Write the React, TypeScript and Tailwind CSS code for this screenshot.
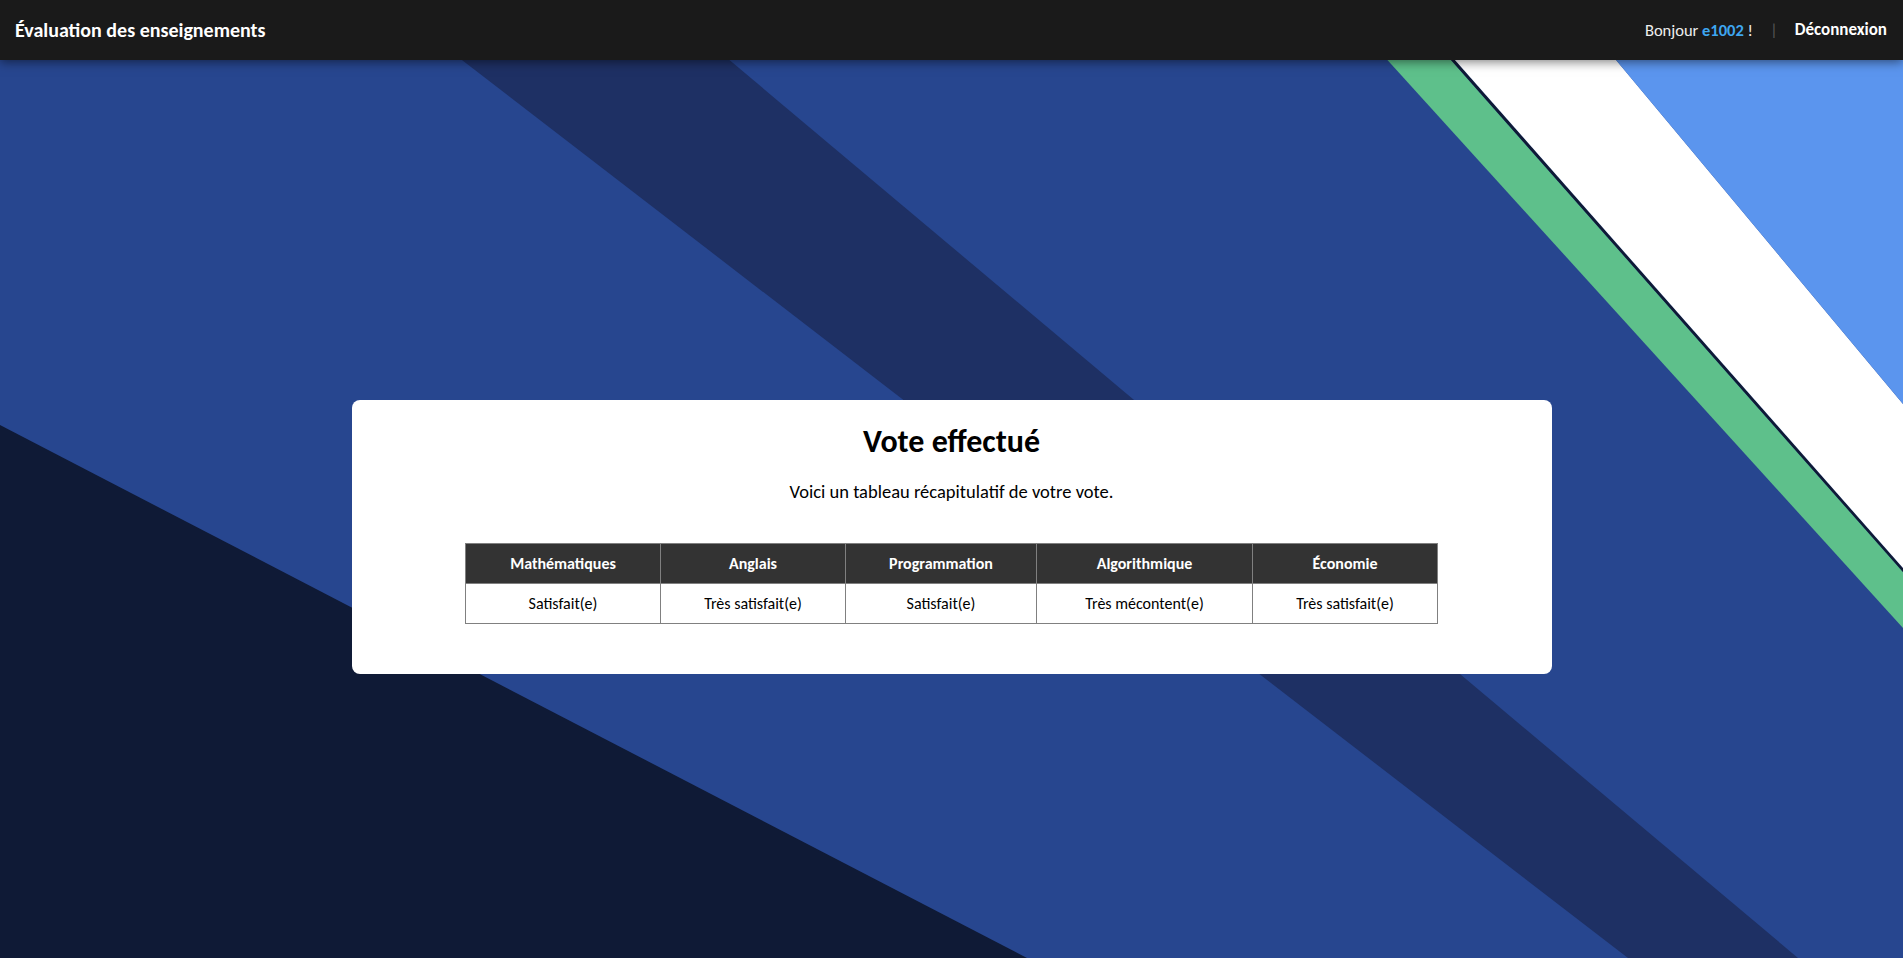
const subjects = [
  { name: 'Mathématiques', vote: 'Satisfait(e)', w: 195 },
  { name: 'Anglais', vote: 'Très satisfait(e)', w: 185 },
  { name: 'Programmation', vote: 'Satisfait(e)', w: 191 },
  { name: 'Algorithmique', vote: 'Très mécontent(e)', w: 216 },
  { name: 'Économie', vote: 'Très satisfait(e)', w: 185 },
]

function Background() {
  return (
    <svg
      className="absolute inset-0 w-full h-full"
      viewBox="0 0 1903 958"
      preserveAspectRatio="none"
    >
      <rect width="1903" height="958" fill="#27468f" />
      <polygon points="384,0 658,0 1798,958 1628,958" fill="#1e3064" />
      <polygon points="0,425 1027,958 0,958" fill="#0f1a36" />
      <polygon points="1333,0 1398,0 1903,572 1903,628" fill="#5ec08b" />
      <polygon points="1398,0 1402,0 1903,568 1903,572" fill="#0f1a36" />
      <polygon points="1402,0 1566,0 1903,404 1903,568" fill="#ffffff" />
      <polygon points="1566,0 1903,0 1903,404" fill="#5b95ee" />
    </svg>
  )
}

export default function App() {
  return (
    <div
      className="relative min-h-screen overflow-hidden"
      style={{ fontFamily: 'Carlito, Calibri, Lato, sans-serif' }}
    >
      <Background />

      <header className="relative z-10 h-[60px] bg-[#1a1a1a] flex items-center justify-between pl-[15px] pr-[16px] shadow-[0_2px_10px_rgba(0,0,0,0.5)]">
        <div className="text-white font-bold text-[20px]">Évaluation des enseignements</div>
        <div className="flex items-center text-[17px] text-white">
          <span className="text-[16.5px] text-[#eeeeee]">
            Bonjour <b className="text-[#3ea6f0]">e1002</b> !
          </span>
          <span className="mx-[17px] text-[#555]">|</span>
          <a href="#" className="font-bold">Déconnexion</a>
        </div>
      </header>

      <main className="relative pt-[340px]">
        <div className="w-[1200px] h-[274px] mx-auto bg-white rounded-lg pt-[22px] flex flex-col items-center text-black">
          <h1 className="text-[32px] leading-[40px] font-bold">Vote effectué</h1>
          <p className="mt-[18px] text-[18.5px] leading-[24px]">Voici un tableau récapitulatif de votre vote.</p>
          <table className="mt-[39px] w-[972px] table-fixed border-collapse text-[16px] text-center">
            <colgroup>
              {subjects.map((s) => (
                <col key={s.name} style={{ width: s.w }} />
              ))}
            </colgroup>
            <thead>
              <tr className="h-[40px] bg-[#333333] text-white">
                {subjects.map((s) => (
                  <th key={s.name} className="border border-[#808080] font-bold">
                    {s.name}
                  </th>
                ))}
              </tr>
            </thead>
            <tbody>
              <tr className="h-[40px]">
                {subjects.map((s) => (
                  <td key={s.name} className="border border-[#808080]">
                    {s.vote}
                  </td>
                ))}
              </tr>
            </tbody>
          </table>
        </div>
      </main>
    </div>
  )
}
